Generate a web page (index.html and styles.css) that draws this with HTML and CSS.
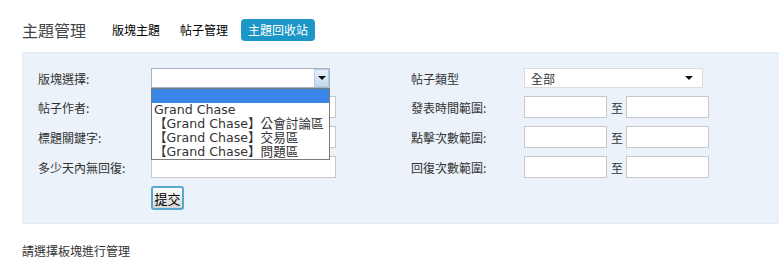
FILE: index.html
```html
<!DOCTYPE html>
<html lang="zh-Hant">
<head>
    <meta charset="UTF-8">
    <title>主題管理</title>
    <link rel="stylesheet" href="styles.css">
</head>
<body>
    <!-- Header with tabs -->
    <div class="header">
        <h1 class="title">主題管理</h1>
        <a class="tab" href="#">版塊主題</a>
        <a class="tab" href="#">帖子管理</a>
        <a class="tab active" href="#">主題回收站</a>
    </div>

    <!-- Search form -->
    <div class="panel">
        <div class="col">
            <div class="row">
                <span class="label">版塊選擇:</span>
                <div class="select-wrap">
                    <div class="select open">
                        <span class="select-text"></span>
                        <span class="select-btn"><i class="caret"></i></span>
                    </div>
                    <ul class="listbox">
                        <li class="selected">&nbsp;</li>
                        <li>Grand Chase</li>
                        <li>【Grand Chase】公會討論區</li>
                        <li>【Grand Chase】交易區</li>
                        <li>【Grand Chase】問題區</li>
                    </ul>
                </div>
            </div>
            <div class="row">
                <span class="label">帖子作者:</span>
                <input class="text wide" type="text">
            </div>
            <div class="row">
                <span class="label">標題關鍵字:</span>
                <input class="text wide" type="text">
            </div>
            <div class="row">
                <span class="label">多少天內無回復:</span>
                <input class="text wide" type="text">
            </div>
            <div class="row">
                <span class="label"></span>
                <button class="submit">提交</button>
            </div>
        </div>

        <div class="col">
            <div class="row">
                <span class="label">帖子類型</span>
                <div class="select plain">
                    <span class="select-text">全部</span>
                    <i class="caret"></i>
                </div>
            </div>
            <div class="row">
                <span class="label">發表時間範圍:</span>
                <input class="text short" type="text">
                <span class="to">至</span>
                <input class="text short" type="text">
            </div>
            <div class="row">
                <span class="label">點擊次數範圍:</span>
                <input class="text short" type="text">
                <span class="to">至</span>
                <input class="text short" type="text">
            </div>
            <div class="row">
                <span class="label">回復次數範圍:</span>
                <input class="text short" type="text">
                <span class="to">至</span>
                <input class="text short" type="text">
            </div>
        </div>
    </div>

    <p class="notice">請選擇板塊進行管理</p>
</body>
</html>
```

FILE: styles.css
```css
/* Reset */
* {
    margin: 0;
    padding: 0;
    box-sizing: border-box;
}

body {
    font-family: "Noto Sans CJK TC", "DejaVu Sans", sans-serif;
    font-size: 12px;
    color: #333;
    background: #fff;
    overflow: hidden;
}

/* Header */
.header {
    display: flex;
    align-items: center;
    height: 52px;
    padding-left: 22px;
    padding-top: 8px;
}

.title {
    font-size: 16px;
    font-weight: normal;
    color: #444;
    margin-right: 19px;
}

.tab {
    color: #000;
    text-decoration: none;
    font-size: 12px;
    line-height: 16px;
    padding: 3px 7px;
    margin-right: 6px;
    border-radius: 4px;
}

.tab.active {
    background-color: #1b96c7;
    color: #fff;
}

/* Search panel */
.panel {
    display: flex;
    margin-left: 22px;
    padding: 15px 0 15px 15px;
    background-color: #ebf2f9;
    border-top: 1px solid #e2eaf3;
    border-bottom: 1px solid #e2eaf3;
    border-left: 1px solid #e2eaf3;
}

.col {
    display: flex;
    flex-direction: column;
    gap: 8px;
}

.col:first-child {
    width: 373px;
}

.row {
    display: flex;
    align-items: center;
    height: 22px;
}

.row:first-child {
    height: 20px;
}

.label {
    width: 113px;
    flex-shrink: 0;
}

/* Selects */
.select-wrap {
    position: relative;
}

.select {
    display: flex;
    align-items: center;
    width: 179px;
    height: 20px;
    background: #fff;
    border: 1px solid #a5b3c2;
}

.select-text {
    flex: 1;
    padding-left: 5px;
}

.select-btn {
    display: flex;
    align-items: center;
    justify-content: center;
    width: 15px;
    height: 18px;
    border: 1px solid #b8cde3;
    background: linear-gradient(#e6f0fa, #c3d8ee);
}

.caret {
    display: inline-block;
    width: 0;
    height: 0;
    border-left: 4px solid transparent;
    border-right: 4px solid transparent;
    border-top: 4px solid #111;
}

.select.plain {
    border-color: #dcdcdc;
    padding-right: 9px;
}

.select.plain .select-text {
    padding-left: 6px;
}

/* Open dropdown list */
.listbox {
    position: absolute;
    left: 0;
    top: 20px;
    width: 179px;
    list-style: none;
    background: #fff;
    border: 1px solid #7a7a7a;
    font-family: "DejaVu Sans", "Noto Sans CJK TC", sans-serif;
    font-size: 12.6px;
    line-height: 14px;
    color: #333;
    z-index: 10;
}

.listbox li {
    height: 14px;
    padding-left: 2px;
    white-space: nowrap;
}

.listbox li.selected {
    background-color: #3a86e8;
}

/* Inputs */
.text {
    height: 22px;
    background: #fff;
    border: 1px solid #c8c8c8;
    font-size: 12px;
}

.text.wide {
    width: 185px;
}

.text.short {
    width: 83px;
}

.to {
    margin: 0 3px 0 4px;
}

.submit {
    margin-top: 2px;
    width: 33px;
    height: 24px;
    font-family: "Noto Sans CJK TC", sans-serif;
    font-size: 13px;
    color: #000;
    border: 2px solid #5aa6cf;
    border-radius: 3px;
    background: linear-gradient(#ffffff, #d6d6d6);
}

/* Footer note */
.notice {
    margin: 18px 0 0 22px;
    font-size: 12px;
    color: #333;
}
```
